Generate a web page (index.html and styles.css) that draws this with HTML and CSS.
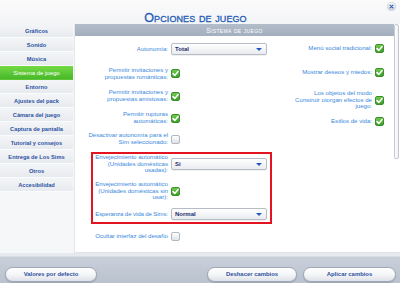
FILE: index.html
```html
<!DOCTYPE html>
<html lang="es">
<head>
<meta charset="utf-8">
<title>Opciones de juego</title>
<link rel="stylesheet" href="styles.css">
</head>
<body>
<div class="page">
  <header class="top">
    <span></span>
    <h1 class="title">Opciones de juego</h1>
    <button class="close" aria-label="Cerrar">
      <svg viewBox="0 0 10 10" width="9" height="9"><defs><linearGradient id="cg" x1="0" y1="0" x2="0" y2="1"><stop offset="0" stop-color="#ffffff"/><stop offset="1" stop-color="#cfd3da"/></linearGradient></defs><circle cx="5" cy="5" r="4.5" fill="url(#cg)" stroke="#b9bec6" stroke-width="0.6"/><path d="M3.4 3.4 L6.6 6.6 M6.6 3.4 L3.4 6.6" stroke="#2d5fb8" stroke-width="1.3" stroke-linecap="round"/></svg>
    </button>
  </header>

  <div class="middle">
    <nav class="side">
      <div class="item">Gráficos</div>
      <div class="item">Sonido</div>
      <div class="item">Música</div>
      <div class="item active">Sistema de juego</div>
      <div class="item">Entorno</div>
      <div class="item">Ajustes del pack</div>
      <div class="item">Cámara del juego</div>
      <div class="item">Captura de pantalla</div>
      <div class="item">Tutorial y consejos</div>
      <div class="item">Entrega de Los Sims</div>
      <div class="item">Otros</div>
      <div class="item">Accesibilidad</div>
    </nav>

    <section class="panel">
      <div class="panel-main">
        <div class="panel-head">Sistema de juego</div>
        <div class="panel-body">
          <div class="col-left">
            <div class="row r1">
              <div class="label">Autonomía:</div>
              <div class="select"><span>Total</span><i class="arrow"></i></div>
            </div>
            <div class="row r2">
              <div class="label">Permitir invitaciones y<br>propuestas románticas:</div>
              <span class="cb on"></span>
            </div>
            <div class="row r3">
              <div class="label">Permitir invitaciones y<br>propuestas amistosas:</div>
              <span class="cb on"></span>
            </div>
            <div class="row r4">
              <div class="label">Permitir rupturas<br>automáticas:</div>
              <span class="cb on"></span>
            </div>
            <div class="row r5">
              <div class="label">Desactivar autonomía para el<br>Sim seleccionado:</div>
              <span class="cb"></span>
            </div>
            <div class="box">
              <div class="row r6">
                <div class="label">Envejecimiento automático<br>(Unidades domésticas<br>usadas):</div>
                <div class="select"><span>Sí</span><i class="arrow"></i></div>
              </div>
              <div class="row r7">
                <div class="label">Envejecimiento automático<br>(Unidades domésticas sin<br>usar):</div>
                <span class="cb on"></span>
              </div>
              <div class="row r8">
                <div class="label tight">Esperanza de vida de Sims:</div>
                <div class="select"><span>Normal</span><i class="arrow"></i></div>
              </div>
            </div>
            <div class="row r9">
              <div class="label">Ocultar interfaz del desafío</div>
              <span class="cb"></span>
            </div>
          </div>

          <div class="col-right">
            <div class="row q1">
              <div class="rlabel">Menú social tradicional:</div>
              <span class="cb on"></span>
            </div>
            <div class="row q2">
              <div class="rlabel">Mostrar deseos y miedos:</div>
              <span class="cb on"></span>
            </div>
            <div class="row q3">
              <div class="rlabel">Los objetos del modo<br>Construir otorgan efectos de<br>juego:</div>
              <span class="cb on"></span>
            </div>
            <div class="row q4">
              <div class="rlabel">Estilos de vida:</div>
              <span class="cb on"></span>
            </div>
          </div>
        </div>
      </div>
      <div class="scroll"><div class="thumb"></div></div>
    </section>
  </div>

  <footer class="bottom">
    <button class="btn b-def">Valores por defecto</button>
    <div class="btn-group">
      <button class="btn b-undo">Deshacer cambios</button>
      <button class="btn b-apply">Aplicar cambios</button>
    </div>
  </footer>
</div>
</body>
</html>
```

FILE: styles.css
```css
* { box-sizing: border-box; }
html, body { margin: 0; padding: 0; }
body {
  width: 400px;
  height: 283px;
  overflow: hidden;
  font-family: "Liberation Sans", Arial, sans-serif;
  background: #f6f7f9;
}
.page {
  width: 400px;
  height: 283px;
  display: flex;
  flex-direction: column;
}

/* top */
.top {
  height: 24px;
  display: grid;
  grid-template-columns: 1fr auto 1fr;
  padding-right: 9px;
  background: linear-gradient(#fbfbfc, #f3f4f6);
}
.title {
  margin: 0;
  padding-top: 10.5px;
  font-size: 12.5px;
  line-height: 14px;
  font-weight: normal;
  font-variant: small-caps;
  color: #1f5cb6;
  letter-spacing: 0.1px;
  -webkit-text-stroke: 0.3px #1f5cb6;
}
.close {
  justify-self: end;
  margin: 1.5px -6px 0 0;
  padding: 0;
  border: 0;
  background: none;
  width: 10px;
  height: 10px;
  display: flex;
}

/* middle */
.middle {
  height: 229px;
  display: flex;
  gap: 1px;
}
.side {
  width: 73px;
  display: flex;
  flex-direction: column;
}
.item {
  height: 14px;
  display: flex;
  align-items: center;
  justify-content: center;
  font-size: 5.7px;
  font-weight: bold;
  color: #2c52a4;
  background: linear-gradient(#f4f5f7, #e7eaee);
  border-bottom: 1px solid #fbfcfd;
}
.item.active {
  background: linear-gradient(#74da44, #48b82a);
  color: #ffffff;
  font-weight: normal;
  font-size: 6px;
  border-bottom-color: #5cc634;
}

.panel {
  flex: 1;
  display: flex;
  background: #ffffff;
  border-bottom: 1px solid #dfe2e7;
}
.panel-main {
  width: 320px;
  display: flex;
  flex-direction: column;
  border-left: 1px solid #e3e6ea;
}
.panel-head {
  height: 12px;
  display: flex;
  align-items: center;
  justify-content: center;
  background: linear-gradient(#b3bdca, #a3aebe);
  color: #ffffff;
  font-size: 6.6px;
  font-variant: small-caps;
  letter-spacing: 0.35px;
}
.panel-body {
  flex: 1;
  display: flex;
  justify-content: space-between;
  padding: 1px 10px 0 3px;
}
.scroll {
  width: 5px;
  background: #ffffff;
}
.thumb {
  width: 5px;
  height: 135px;
  border: 1px solid #c4c9d0;
  border-radius: 2px;
  background: linear-gradient(90deg, #ffffff, #eef0f3);
}

/* rows */
.row {
  display: flex;
  align-items: center;
  font-size: 6.1px;
  line-height: 6.6px;
  color: #3a89dc;
}
.label {
  width: 90px;
  margin-right: 3px;
  text-align: right;
  white-space: nowrap;
}
.label.tight { letter-spacing: -0.12px; }
.rlabel {
  text-align: right;
  margin-right: 3px;
  white-space: nowrap;
}
.col-right .row { justify-content: flex-end; }

.r1 { height: 24px; }
.r2 { height: 25px; }
.r3 { height: 20px; }
.r4 { height: 24px; }
.r5 { height: 18px; }
.r6 { height: 20px; }
.r7 { height: 34px; }
.r8 { height: 12px; }
.r9 { height: 24px; }

.q1 { height: 23px; }
.q2 { height: 24px; }
.q3 { height: 32px; }
.q4 { height: 10px; }

.box {
  margin: 4px 0 0 13px;
  width: 181px;
  border: 2px solid #e3141f;
  padding: 0 3px 2px 0;
}
.box .label { width: 75px; }

/* select */
.select {
  width: 96px;
  height: 12px;
  display: flex;
  align-items: center;
  justify-content: space-between;
  padding: 0 4px 0 3px;
  border: 1px solid #b7bdc6;
  border-radius: 2px;
  background: linear-gradient(#ffffff, #e9ebef);
  box-shadow: 0 0.5px 0.5px rgba(0,0,0,0.12);
  color: #1d2f6e;
  font-weight: bold;
  font-size: 6px;
}
.arrow {
  width: 0;
  height: 0;
  border-left: 3px solid transparent;
  border-right: 3px solid transparent;
  border-top: 3px solid #2458c0;
}

/* checkbox */
.cb {
  width: 9px;
  height: 9px;
  flex: none;
  border-radius: 2px;
  border: 1px solid #b2b8c1;
  background: linear-gradient(#ffffff, #dfe2e7);
}
.cb.on {
  border-color: #3a8f2a;
  background:
    url("data:image/svg+xml;utf8,<svg xmlns='http://www.w3.org/2000/svg' viewBox='0 0 9 9'><path d='M2 4.6 L3.8 6.4 L7.1 2.6' fill='none' stroke='white' stroke-width='1.5' stroke-linecap='round' stroke-linejoin='round'/></svg>") center / 9px 9px no-repeat,
    linear-gradient(#72c84e, #3e9e2c);
}

/* bottom */
.bottom {
  flex: 1;
  display: flex;
  justify-content: space-between;
  align-items: flex-start;
  padding: 13.5px 4px 0 5px;
  background: linear-gradient(#e6e9ed 0, #e6e9ed 3px, #c9d0da 4px, #b9c2ce 100%);
}
.btn-group {
  display: flex;
  gap: 6px;
}
.btn {
  height: 15px;
  padding: 0;
  border: 1px solid #9ea8b6;
  border-radius: 8px;
  background: linear-gradient(#ffffff 0%, #f3f4f6 55%, #dde1e7 100%);
  box-shadow: 0 1px 1px rgba(60,70,90,0.25);
  font-family: "Liberation Sans", Arial, sans-serif;
  font-size: 5.9px;
  font-weight: bold;
  color: #2c4f9c;
}
.b-def { width: 92px; }
.b-undo { width: 90px; }
.b-apply { width: 93px; }
```
